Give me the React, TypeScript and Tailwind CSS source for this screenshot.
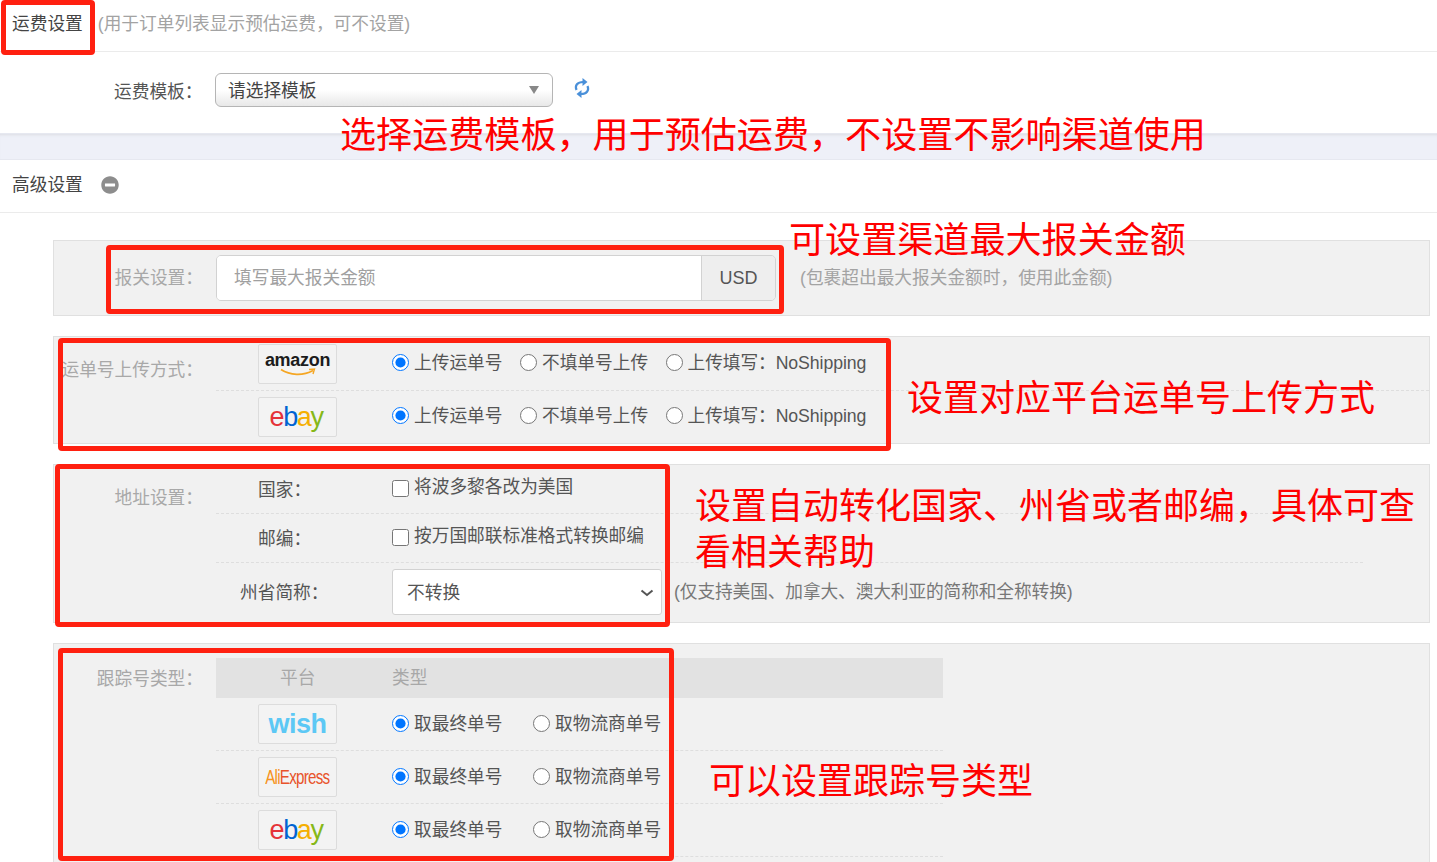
import React from "react";
import { FaMinusCircle } from "react-icons/fa";

function LogoBox({ children }: { children: React.ReactNode }) {
  return (
    <div className="w-[79px] h-[40px] flex flex-col items-center justify-center overflow-hidden rounded-[2px] border border-[#dcdcdc] bg-[#f3f3f3]">
      {children}
    </div>
  );
}

function EbayLogo() {
  return (
    <span className="ml-[-3px] font-['Liberation_Sans',sans-serif] text-[27px] leading-none tracking-[-1.4px]">
      <span className="text-[#e53238]">e</span>
      <span className="text-[#0064d2]">b</span>
      <span className="text-[#f5af02]">a</span>
      <span className="text-[#86b817]">y</span>
    </span>
  );
}

function AmazonLogo() {
  return (
    <>
      <span className="font-['Liberation_Sans',sans-serif] text-[18px] font-bold leading-[18px] tracking-[-0.3px] text-[#1c1c1c]">amazon</span>
      <svg width="40" height="9" viewBox="0 0 40 9" className="mt-[-1px]">
        <path d="M3 1.5C12 7.5 25 8 35 2.5" fill="none" stroke="#f5a623" strokeWidth="1.8" />
        <path d="M31 1.5L36.5 1L35 6" fill="none" stroke="#f5a623" strokeWidth="1.4" />
      </svg>
    </>
  );
}

function Radio({ label, checked, name, className }: { label: string; checked?: boolean; name: string; className?: string }) {
  return (
    <label className="flex items-center gap-[5px] whitespace-nowrap">
      <input type="radio" name={name} defaultChecked={checked} className="m-0 w-[17px] h-[17px]" />
      <span className={className}>{label}</span>
    </label>
  );
}

function UploadRow({ name, logo, last }: { name: string; logo: React.ReactNode; last?: boolean }) {
  return (
    <div className={last ? "h-[52px] flex items-start pt-[6px]" : "h-[54px] flex items-start pt-[7px] border-b border-dashed border-[#dedede]"}>
      <div className="w-[176px] pl-[42px]">
        <LogoBox>{logo}</LogoBox>
      </div>
      <div className="flex h-[34px] items-center gap-[17.5px] mt-[2px]">
        <Radio name={name} label="上传运单号" checked />
        <Radio name={name} label="不填单号上传" />
        <Radio name={name} label="上传填写：NoShipping" className="tracking-[-0.08px]" />
      </div>
    </div>
  );
}

function TrackRow({ name, logo }: { name: string; logo: React.ReactNode }) {
  return (
    <div className="h-[53px] w-[727px] flex items-center border-b border-dashed border-[#dedede]">
      <div className="w-[176px] pl-[42px]">
        <LogoBox>{logo}</LogoBox>
      </div>
      <div className="w-[141px]">
        <Radio name={name} label="取最终单号" checked />
      </div>
      <Radio name={name} label="取物流商单号" />
    </div>
  );
}

export default function App() {
  return (
    <div className="relative h-[862px] overflow-hidden bg-white font-['Liberation_Sans','Noto_Sans_CJK_SC',sans-serif] text-[17.7px] text-[#555]">
      {/* 运费设置 */}
      <div className="h-[52px] flex items-center pl-[12px] pb-[3px] border-b border-[#ebebeb]">
        <span className="text-[#444]">运费设置</span>
        <span className="ml-[15px] text-[#a3a3a3]">(用于订单列表显示预估运费，可不设置)</span>
      </div>
      <div className="h-[81px] flex items-center">
        <div className="w-[202px] pl-[114px] whitespace-nowrap">运费模板：</div>
        <div className="ml-[13px] w-[338px] h-[34px] flex items-center justify-between px-[12px] mt-[-5px] rounded-[6px] border border-[#b5b5b5] bg-gradient-to-b from-white via-white to-[#e8e8e8]">
          <span className="pt-[2px] text-[#444]">请选择模板</span>
          <span className="mr-[1px] border-x-[5px] border-t-[8px] border-x-transparent border-t-[#888]" />
        </div>
        <svg width="18" height="22" viewBox="0 0 18 22" fill="none" className="ml-[20px] mt-[-9px] text-[#4a90d9]">
          <path d="M3.5 13C1.5 8.5 4.5 5 10 5" stroke="currentColor" strokeWidth="2.2" />
          <path d="M14.5 5L9.5 1V9Z" fill="currentColor" />
          <path d="M14.5 9C16.5 13.5 13.5 17 8 17" stroke="currentColor" strokeWidth="2.2" />
          <path d="M3.5 17L8.5 13V21Z" fill="currentColor" />
        </svg>
      </div>
      <div className="h-[27px] bg-[#eef0f8] border-y border-[#e6e8f0] shadow-[inset_0_3px_3px_-2px_#dcdde3]" />
      {/* 高级设置 */}
      <div className="h-[53px] flex items-center pl-[12px] pb-[2px] border-b border-[#ebebeb]">
        <span className="text-[#444]">高级设置</span>
        <FaMinusCircle className="ml-[18px] w-[18px] h-[18px] text-[#8d8d8d]" />
      </div>

      <div className="ml-[53px] mr-[7px] mt-[27px] flex flex-col gap-[20px]">
        {/* 报关设置 */}
        <div className="h-[76px] flex items-center border border-[#e0e0e0] bg-[#f1f1f1]">
          <div className="w-[149px] text-right text-[#a8a8a8] whitespace-nowrap">报关设置：</div>
          <div className="ml-[13px] w-[560px] h-[46px] flex overflow-hidden rounded-[5px] border border-[#d2d2d2]">
            <input
              placeholder="填写最大报关金额"
              className="min-w-0 flex-1 bg-white px-[17px] outline-none placeholder:text-[#a0a0a0]"
            />
            <div className="w-[74px] flex items-center justify-center border-l border-[#d2d2d2] bg-[#eeeeee] text-[18px]">USD</div>
          </div>
          <div className="ml-[24px] text-[#a3a3a3]">(包裹超出最大报关金额时，使用此金额)</div>
        </div>

        {/* 运单号上传方式 */}
        <div className="h-[108px] flex border border-[#e0e0e0] bg-[#f1f1f1]">
          <div className="w-[149px] pt-[20px] text-right text-[#a8a8a8] whitespace-nowrap">运单号上传方式：</div>
          <div className="ml-[13px] flex-1">
            <UploadRow name="up-amazon" logo={<AmazonLogo />} />
            <UploadRow name="up-ebay" logo={<EbayLogo />} last />
          </div>
        </div>

        {/* 地址设置 */}
        <div className="h-[159px] flex border border-[#e0e0e0] bg-[#f1f1f1]">
          <div className="w-[149px] pt-[20px] text-right text-[#a8a8a8] whitespace-nowrap">地址设置：</div>
          <div className="ml-[13px] w-[1147px]">
            <div className="h-[49px] flex items-center border-b border-dashed border-[#dedede]">
              <div className="w-[176px] pl-[42px] pt-[2px]">国家：</div>
              <label className="flex items-center gap-[5px]">
                <input type="checkbox" className="m-0 w-[17px] h-[17px]" />
                <span className="mt-[-4px]">将波多黎各改为美国</span>
              </label>
            </div>
            <div className="h-[49px] flex items-center border-b border-dashed border-[#dedede]">
              <div className="w-[176px] pl-[42px] pt-[2px]">邮编：</div>
              <label className="flex items-center gap-[5px]">
                <input type="checkbox" className="m-0 w-[17px] h-[17px]" />
                <span className="mt-[-4px]">按万国邮联标准格式转换邮编</span>
              </label>
            </div>
            <div className="h-[60px] flex items-center pb-[2px]">
              <div className="w-[176px] pl-[24px] pt-[2px]">州省简称：</div>
              <div className="relative">
                <select className="block w-[270px] h-[46px] appearance-none rounded-[3px] border border-[#d2d2d2] bg-white pl-[14px] pt-[2px]">
                  <option>不转换</option>
                </select>
                <svg width="14" height="8" viewBox="0 0 14 8" fill="none" className="pointer-events-none absolute right-[8px] top-[20px]">
                  <path d="M1.5 1.5L7 6L12.5 1.5" stroke="#555" strokeWidth="2" />
                </svg>
              </div>
              <span className="ml-[12px] tracking-[-0.1px] text-[#777]">(仅支持美国、加拿大、澳大利亚的简称和全称转换)</span>
            </div>
          </div>
        </div>

        {/* 跟踪号类型 */}
        <div className="h-[240px] flex pt-[14px] border border-[#e0e0e0] bg-[#f1f1f1]">
          <div className="w-[149px] pt-[8px] text-right text-[#a8a8a8] whitespace-nowrap">跟踪号类型：</div>
          <div className="ml-[13px]">
            <div className="h-[40px] w-[727px] flex items-center bg-[#e2e2e2] text-[#a8a8a8]">
              <div className="w-[176px] pl-[64px]">平台</div>
              <div>类型</div>
            </div>
            <TrackRow
              name="tr-wish"
              logo={<span className="font-['Liberation_Sans',sans-serif] text-[27px] font-bold leading-none tracking-[-0.5px] text-[#5cc8f5]">wish</span>}
            />
            <TrackRow
              name="tr-ali"
              logo={
                <span className="font-['Liberation_Sans',sans-serif] text-[20px] leading-none tracking-[-1px] scale-x-[0.76] whitespace-nowrap">
                  <span className="text-[#f7941d]">Ali</span>
                  <span className="text-[#e8532b]">Express</span>
                </span>
              }
            />
            <TrackRow name="tr-ebay" logo={<EbayLogo />} />
          </div>
        </div>
      </div>

      {/* red annotations over the screenshot */}
      <div className="absolute left-[1px] top-0 w-[94px] h-[55px] rounded-[4px] border-[5px] border-[#ff2010]" />
      <div className="absolute left-[106px] top-[245px] w-[678px] h-[69px] rounded-[4px] border-[5px] border-[#ff2010]" />
      <div className="absolute left-[58px] top-[338px] w-[833px] h-[113px] rounded-[4px] border-[5px] border-[#ff2010]" />
      <div className="absolute left-[55px] top-[464px] w-[615px] h-[163px] rounded-[4px] border-[5px] border-[#ff2010]" />
      <div className="absolute left-[58px] top-[648px] w-[616px] h-[213px] rounded-[4px] border-[5px] border-[#ff2010]" />

      <div className="absolute left-[340px] top-[113px] text-[36.1px] leading-[46px] text-[#ff0000] whitespace-nowrap">选择运费模板，用于预估运费，不设置不影响渠道使用</div>
      <div className="absolute left-[789px] top-[218px] text-[36.1px] leading-[46px] text-[#ff0000] whitespace-nowrap">可设置渠道最大报关金额</div>
      <div className="absolute left-[907px] top-[376px] text-[36px] leading-[46px] text-[#ff0000] whitespace-nowrap">设置对应平台运单号上传方式</div>
      <div className="absolute left-[695px] top-[484px] text-[36px] leading-[46px] text-[#ff0000] whitespace-nowrap">设置自动转化国家、州省或者邮编，具体可查<br />看相关帮助</div>
      <div className="absolute left-[709px] top-[759px] text-[36px] leading-[46px] text-[#ff0000] whitespace-nowrap">可以设置跟踪号类型</div>
    </div>
  );
}
